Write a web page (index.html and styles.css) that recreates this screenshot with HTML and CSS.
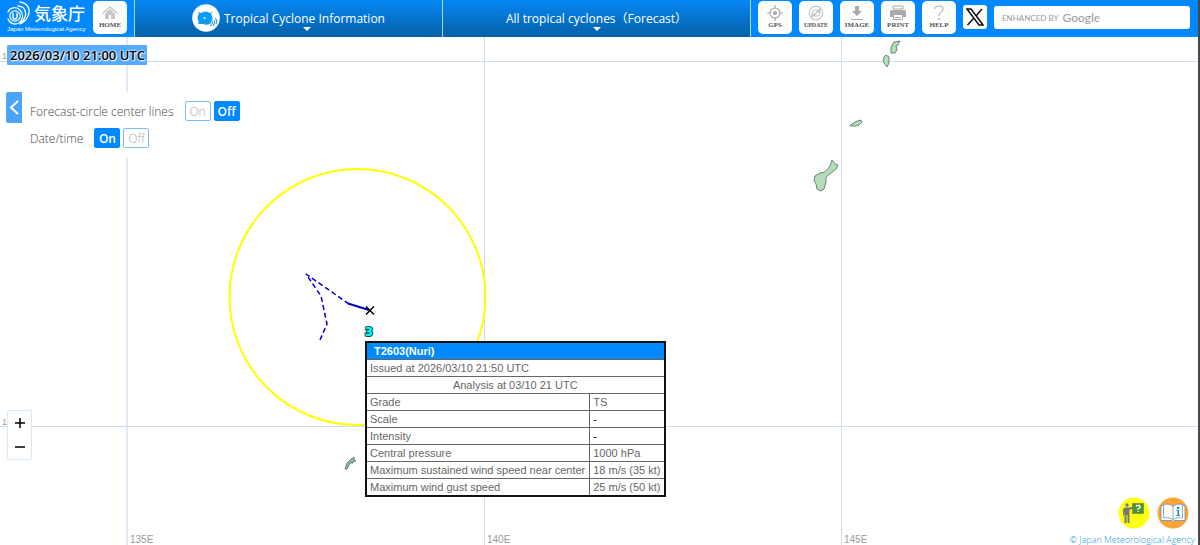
FILE: index.html
```html
<!DOCTYPE html>
<html lang="en">
<head>
<meta charset="utf-8">
<title>Tropical Cyclone Information</title>
<link rel="stylesheet" href="styles.css">
</head>
<body>
<header class="topbar">
  <div class="brand">
    <a class="logo" href="#">
      <span class="logo-row">
        <svg class="logo-mark" width="24" height="24" viewBox="0 0 24 24" fill="none" stroke="#fff" stroke-linecap="round">
          <circle cx="8" cy="15" r="5.200" stroke-width="1.200"/>
          <path d="M6 12.500v3.500c0 2.500 4 2.500 4 0v-3.500" stroke-width="1.500"/>
          <path d="M1 11c1.500-4.500 8-6 12-2 4 4 3 10-1 13-4 2-9 1-11-4" stroke-width="1.300"/>
          <path d="M11 5c6 0 9 6 7 11-1 3-3 5-5 6M13 1c8 1 11 8 8 14-1.500 4-4 6-8 8" stroke-width="1.300"/>
        </svg>
        <span class="logo-name" lang="ja">気象庁</span>
      </span>
      <span class="logo-sub">Japan Meteorological Agency</span>
    </a>
    <button class="tool" type="button">
      <svg width="18" height="15" viewBox="0 0 18 15" fill="#c8c8c8"><path d="M9 1 17 8l-1 1-7-6-7 6-1-1z"/><path d="M9 4l5 4.500V14h-4v-4H8v4H4V8.500z"/></svg>
      <span>HOME</span>
    </button>
  </div>
  <button class="menu" type="button">
    <span class="menu-title">
      <svg width="28" height="28" viewBox="0 0 28 28"><circle cx="14" cy="14" r="13.800" fill="#fff"/><path d="M6 8l3 1c3-2 6-2 9 0l3-1-2 2c2 3 2 6 0 9-2 2-5 2-8 1l-3 0-2 0 1-2c-2-2-2-6 0-8z" fill="#0b9bf0"/><circle cx="12.500" cy="14" r="1" fill="#fff"/><path d="M18 22c2-1 3-3 2-5M21 22c1-1 2-4 1-6M23 20c1-2 1-4 0-6" stroke="#fff" stroke-width="2.500" fill="none"/><path d="M18 22c2-1 3-3 2-5M21 22c1-1 2-4 1-6M24 20c1-2 1-4-1-6" stroke="#0b86dc" fill="none"/></svg>
      Tropical Cyclone Information
    </span>
    <svg class="caret" width="8" height="4" viewBox="0 0 8 4"><path d="M0 0h8L4 4z" fill="#fff"/></svg>
  </button>
  <button class="menu" type="button">
    <span class="menu-title">All tropical cyclones（Forecast）</span>
    <svg class="caret" width="8" height="4" viewBox="0 0 8 4"><path d="M0 0h8L4 4z" fill="#fff"/></svg>
  </button>
  <div class="tools">
    <button class="tool" type="button">
      <svg width="16" height="16" viewBox="0 0 16 16" fill="none" stroke="#aaa" stroke-width="1.200"><circle cx="8" cy="8" r="5"/><circle cx="8" cy="8" r="1.500" fill="#aaa"/><path d="M8 0v4M8 12v4M0 8h4M12 8h4"/></svg>
      <span>GPS</span>
    </button>
    <button class="tool small" type="button">
      <svg width="16" height="16" viewBox="0 0 16 16" fill="none" stroke="#c6c6c6" stroke-width="1.200"><circle cx="8" cy="8" r="6.800"/><path d="M4 9c0-4 4-5 6-3M12 7c0 4-4 5-6 3M4 12l8-8"/><path d="M9 7h3V4zM7 9H4v3z" fill="#c6c6c6"/></svg>
      <span>UPDATE</span>
    </button>
    <button class="tool" type="button">
      <svg width="16" height="16" viewBox="0 0 16 16" fill="#aaa"><path d="M6 1h4v5h3l-5 5-5-5h3z"/><path d="M2 14h12v1H2z"/></svg>
      <span>IMAGE</span>
    </button>
    <button class="tool" type="button">
      <svg width="18" height="16" viewBox="0 0 18 16" fill="#aaa"><path d="M4 1h10v3H4z" fill="#fff" stroke="#aaa"/><path d="M2 5h14l1 1v6h-3v-2H4v2H1V6z"/><path d="M4.500 9.500h9v5h-9z" fill="#fff" stroke="#aaa"/><path d="M6 12h6v1H6z"/></svg>
      <span>PRINT</span>
    </button>
    <button class="tool" type="button">
      <svg width="16" height="16" viewBox="0 0 16 16" fill="none" stroke="#c4c4c4" stroke-width="1.400"><path d="M4 4c0-4 8-4 8 0 0 3-4 3-4 7"/><circle cx="8" cy="14" r=".6" fill="#c4c4c4"/></svg>
      <span>HELP</span>
    </button>
    <a class="x-link" href="#" aria-label="X">
      <svg width="18" height="18" viewBox="0 0 18 18" fill="none" stroke="#111"><path d="M1 1h4l12 16h-4z" stroke-width="1.500"/><path d="M16 1 10 8M8 10 1.500 17" stroke-width="1.500"/></svg>
    </a>
    <label class="search">
      <span class="search-by">ENHANCED BY</span>
      <span class="search-brand">Google</span>
      <input type="text" aria-label="Search">
    </label>
  </div>
</header>

<main class="map">
  <svg class="chart" role="img" aria-label="Cyclone track map">
    <g transform="translate(0 -37)">
      <g stroke-width="1" fill="none">
        <path d="M127 37v2000" stroke="#dfeaf9" stroke-width="2"/>
        <path d="M484.500 37v2000M841.500 37v2000M0 61.500h4000M0 426.500h4000" stroke="#d0dcf4"/>
      </g>
      <g class="degree">
        <text x="2" y="59">1</text>
        <text x="2" y="425">1</text>
      </g>
      <circle cx="357.500" cy="297" r="128" fill="none" stroke="#ff0" stroke-width="2"/>
      <path d="M320 340l7-16-6-28-15-22 43 30" fill="none" stroke="#00c" stroke-width="1.500" stroke-dasharray="5 3"/>
      <path d="M348 303.500l21 6.500" stroke="#00c" stroke-width="2"/>
      <path d="M366 306.500l8 8m0-8-8 8" stroke="#000" stroke-width="1.500"/>
      <text class="storm-no" x="369" y="336">3</text>
      <g fill="#b5dcb5" stroke="#62887a" stroke-width="1" stroke-linejoin="round">
        <path d="M832 160l3 4 3 1-2 4-5 4-5 4v5l-2 7-3 2-4-2-1-5-2-3 1-5 5-3 5-1 5-6z"/>
        <path d="M850 125.500l6-4 5-1.500 1 2-3 3-3 1-6 0z"/>
        <path d="M900 41l-2 4-2 1 1 4-2 3h-4l0-6 3-5z"/>
        <path d="M886 55l3 2v6l-2 4-3-4-1-2 1-4z"/>
        <path d="M345 469l2-6 3-3 4-3 0 2 2 2-2 0-1 2-3 0-3 6z" fill="#8cb89c"/>
      </g>
    </g>
  </svg>

  <time class="clock">2026/03/10 21:00 UTC</time>

  <section class="options">
    <button class="collapse" type="button" aria-label="Collapse">
      <svg width="9" height="15" viewBox="0 0 9 15" fill="none" stroke="#fff" stroke-width="2"><path d="M8 1 1 7.500 8 14"/></svg>
    </button>
    <div class="options-body">
      <div class="option"><span>Forecast-circle center lines</span><span class="pair"><button class="toggle" type="button">On</button><button class="toggle active" type="button">Off</button></span></div>
      <div class="option"><span>Date/time</span><span class="pair"><button class="toggle active" type="button">On</button><button class="toggle" type="button">Off</button></span></div>
    </div>
  </section>

  <table class="storm">
    <thead>
      <tr><th colspan="2">T2603(Nuri)</th></tr>
    </thead>
    <tbody>
      <tr><td colspan="2">Issued at 2026/03/10 21:50 UTC</td></tr>
      <tr><td class="center" colspan="2">Analysis at 03/10 21 UTC</td></tr>
      <tr><td>Grade</td><td>TS</td></tr>
      <tr><td>Scale</td><td class="dash">-</td></tr>
      <tr><td>Intensity</td><td class="dash">-</td></tr>
      <tr><td>Central pressure</td><td>1000 hPa</td></tr>
      <tr><td>Maximum sustained wind speed near center</td><td>18 m/s (35 kt)</td></tr>
      <tr><td>Maximum wind gust speed</td><td>25 m/s (50 kt)</td></tr>
    </tbody>
  </table>

  <div class="zoom">
    <button type="button" aria-label="Zoom in"><svg width="10" height="10" viewBox="0 0 10 10"><path d="M0 5h10M5 0v10" stroke="#000" stroke-width="1.500"/></svg></button>
    <button type="button" aria-label="Zoom out"><svg width="10" height="10" viewBox="0 0 10 10"><path d="M0 5h10" stroke="#000" stroke-width="1.500"/></svg></button>
  </div>

  <span class="meridian m135">135E</span>
  <span class="meridian m140">140E</span>
  <span class="meridian m145">145E</span>

  <div class="corner">
    <div class="guides">
      <button type="button" aria-label="How to use"><svg width="32" height="32" viewBox="0 0 32 32"><circle cx="16" cy="16" r="15.500" fill="#ff1"/><path d="M14.500 6.500h11v10h-11z" fill="#4a9432" stroke="#8a9a30"/><path d="M18 9.500c1-2 5-1 4 1l-2 1.500v1" stroke="#fff" stroke-width="1.300" fill="none"/><path d="M19.500 14h1.300v1h-1.300z" fill="#fff"/><circle cx="9" cy="8" r="1.700" fill="#777"/><path d="M6.500 10.500h5l4-1v1.500l-4 2v13h-2v-8h-1v8h-2V13l-.5 5.500H5v-6z" fill="#777"/></svg></button>
      <button type="button" aria-label="Guide"><svg width="32" height="32" viewBox="0 0 32 32"><circle cx="16" cy="16" r="15.500" fill="#ffa336"/><path d="M4 8.500h2l1-1c4-1 7 0 9 2 2-2 5-3 9-2l1 1h2v15H17l-1 1-1-1H4z" fill="#fff" stroke="#5b93b8" stroke-width=".8"/><path d="M16 9.500v13M6.500 8v13c4-1 7.500 0 9.500 2 2-2 5.500-3 9.500-2V8" fill="none" stroke="#6c9cb4" stroke-width=".8"/><circle cx="21" cy="11" r="1.300" fill="#168ed0"/><path d="M19.500 13H22v5h1v1h-3.500v-1h1v-4h-1z" fill="#168ed0"/></svg></button>
    </div>
    <a href="#">© Japan Meteorological Agency</a>
  </div>
</main>
</body>
</html>
```

FILE: styles.css
```css
* { box-sizing: border-box; }

body {
  margin: 0;
  min-height: 100vh;
  display: flex;
  flex-direction: column;
  border-right: 2px solid #484848;
  background: #fff;
  font-family: "Open Sans", "Noto Sans CJK JP", sans-serif;
  font-size: 12px;
}

button { margin: 0; padding: 0; border: 0; background: none; font: inherit; cursor: pointer; }
svg { display: block; flex: none; }

.topbar { display: flex; height: 37px; background: #08f; color: #fff; }

.brand { display: flex; gap: 8px; padding: 1px 7px 0 7px; }
.logo { color: #fff; text-decoration: none; width: 78px; white-space: nowrap; }
.logo-row { display: flex; align-items: center; gap: 3px; height: 24px; }
.logo-name { font: 500 17px/24px "Noto Sans CJK JP", sans-serif; }
.logo-sub { display: block; font: 6px/8px "Liberation Sans", sans-serif; }

.tool {
  width: 34px;
  height: 33px;
  padding: 4px 0 5px;
  display: flex;
  flex-direction: column;
  align-items: center;
  justify-content: space-between;
  border-radius: 5px;
  background: #fff;
  color: #555;
  font: bold 7px/7px "Liberation Serif", serif;
}
.tool.small { font-size: 6px; }

.menu {
  flex: 1;
  display: flex;
  flex-direction: column;
  align-items: center;
  position: relative;
  border-left: 1px solid #a8d6ff;
  background: linear-gradient(#0587f5, #0560a6);
  color: #fff;
  font-size: 12px;
}
.menu-title { display: flex; align-items: center; gap: 4px; height: 36px; white-space: nowrap; }
.caret { position: absolute; bottom: 6px; left: calc(50% + 14px); }
.menu + .menu .caret { left: calc(50% - 4px); }

.tools { display: flex; gap: 7px; padding: 1px 8px 0 7px; border-left: 1px solid #a8d6ff; }
.x-link { width: 24px; height: 24px; margin-top: 4px; display: grid; place-items: center; border-radius: 3px; background: #fff; }
.search {
  width: 196px;
  height: 23px;
  margin-top: 5px;
  padding: 0 8px;
  display: flex;
  align-items: center;
  gap: 4px;
  border-radius: 3px;
  background: #fff;
  color: #999;
  white-space: nowrap;
}
.search-by { font: 8px/22px Lato, sans-serif; }
.search-brand { font: 12px/22px Lato, sans-serif; }
.search input { flex: 1; min-width: 0; border: 0; padding: 0; outline: 0; background: none; }

.map { flex: 1; position: relative; overflow: hidden; }
.chart { position: absolute; width: 100%; height: 100%; }
.degree { font: 9px "Liberation Sans", sans-serif; fill: #999; }
.storm-no { font: bold 12px "DejaVu Sans", sans-serif; fill: #0ff; stroke: #055; stroke-width: 2px; paint-order: stroke; text-anchor: middle; }

.clock {
  position: absolute;
  left: 7px;
  top: 8px;
  padding: 0 2px 0 3px;
  border-radius: 1px;
  background: #57abff;
  color: #000;
  font-size: 13px;
  line-height: 20px;
  font-weight: 600;
  text-shadow: 0 0 2px #fff, 0 0 2px #fff, 1px 1px 1px #fff;
}

.options { position: absolute; left: 6px; top: 55px; display: flex; align-items: flex-start; }
.collapse { width: 16px; height: 31px; display: grid; place-items: center; background: #4ba3fa; border-radius: 2px 0 0 2px; }
.options-body { width: 228px; padding: 9px 8px; display: grid; gap: 7px; background: #fff; color: #444; font-weight: 300; }
.option { display: flex; align-items: center; gap: 11px; white-space: nowrap; }
.pair { display: flex; gap: 3px; }
.toggle { width: 26px; height: 20px; border: 1px solid #7dbbf5; border-radius: 2px; background: #fff; color: #aaa; }
.toggle.active { border-color: #08f; background: #08f; color: #fff; font-weight: 600; }

.storm {
  position: absolute;
  left: 365px;
  top: 304px;
  border-collapse: collapse;
  border: 2px solid #111;
  background: #fff;
  color: #666;
  font: 11px/16px "Liberation Sans", sans-serif;
  white-space: nowrap;
}
.storm th, .storm td { height: 17px; padding: 0 4px 0 3px; border: 1px solid #666; text-align: left; }
.storm th { padding-left: 7px; border: 0; background: #08f; color: #fff; }
.storm .center { text-align: center; }
.storm .dash { color: #000; }

.zoom { position: absolute; left: 7px; bottom: 85px; width: 25px; border: 1px solid #d4eaff; border-radius: 2px; background: #fff; }
.zoom button { display: grid; place-items: center; width: 100%; height: 24px; }

.meridian { position: absolute; bottom: 0; color: #999; font: 10px/10px "Liberation Sans", sans-serif; }
.m135 { left: 130px; }
.m140 { left: 487px; }
.m145 { left: 844px; }

.corner { position: absolute; right: 3px; bottom: 0; display: flex; flex-direction: column; align-items: flex-end; gap: 5px; }
.guides { display: flex; gap: 7px; padding-right: 6px; }
.corner a { color: #1a9ee0; font-size: 9px; font-weight: 300; line-height: 11px; text-decoration: none; }
```
